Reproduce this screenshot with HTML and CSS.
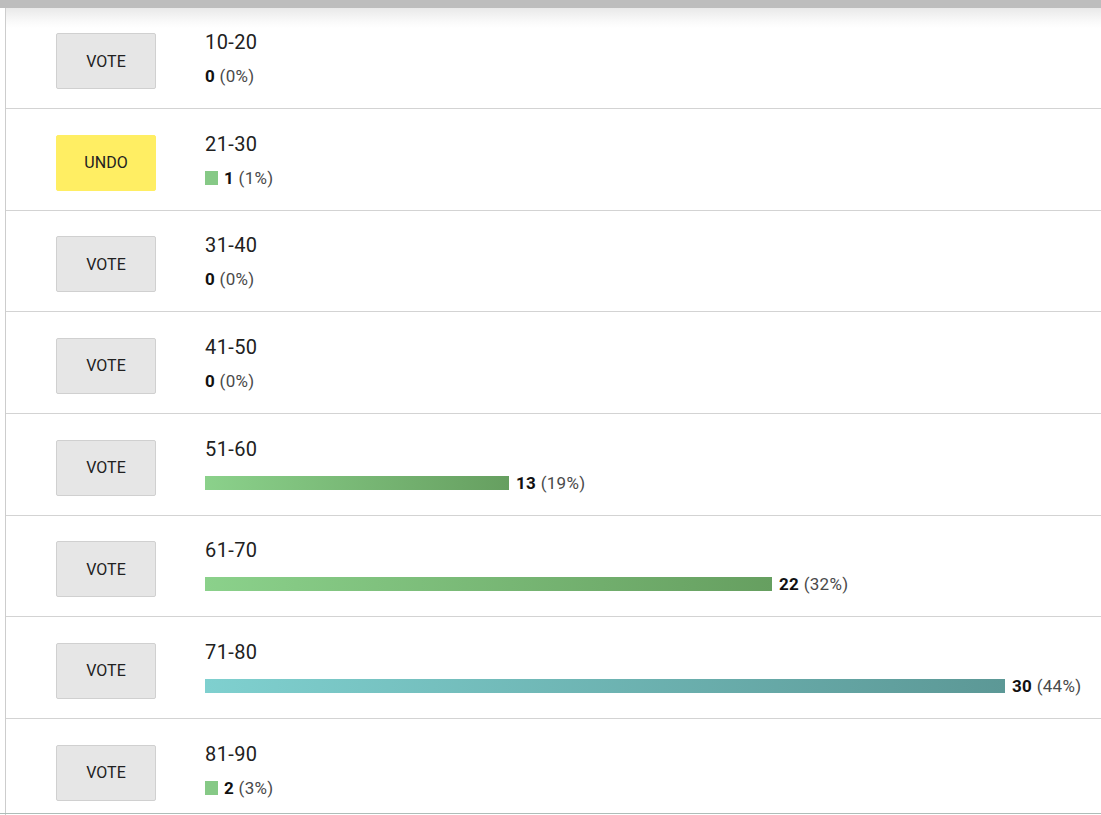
FILE: index.html
```html
<!DOCTYPE html>
<html>
<head>
<meta charset="utf-8">
<link rel="stylesheet" href="styles.css">
</head>
<body>
<div class="topbar"></div>
<div class="list">
  <div class="row">
    <button class="btn">VOTE</button>
    <div class="info">
      <div class="title">10-20</div>
      <div class="result"><b>0</b>&nbsp;<span class="pct">(0%)</span></div>
    </div>
  </div>
  <div class="row">
    <button class="btn btn-undo">UNDO</button>
    <div class="info">
      <div class="title">21-30</div>
      <div class="result"><span class="bar bar-small" style="width:13px"></span><b>1</b>&nbsp;<span class="pct">(1%)</span></div>
    </div>
  </div>
  <div class="row">
    <button class="btn">VOTE</button>
    <div class="info">
      <div class="title">31-40</div>
      <div class="result"><b>0</b>&nbsp;<span class="pct">(0%)</span></div>
    </div>
  </div>
  <div class="row">
    <button class="btn">VOTE</button>
    <div class="info">
      <div class="title">41-50</div>
      <div class="result"><b>0</b>&nbsp;<span class="pct">(0%)</span></div>
    </div>
  </div>
  <div class="row">
    <button class="btn">VOTE</button>
    <div class="info">
      <div class="title">51-60</div>
      <div class="result"><span class="bar bar-green" style="width:304px"></span><b>13</b>&nbsp;<span class="pct">(19%)</span></div>
    </div>
  </div>
  <div class="row">
    <button class="btn">VOTE</button>
    <div class="info">
      <div class="title">61-70</div>
      <div class="result"><span class="bar bar-green" style="width:567px"></span><b>22</b>&nbsp;<span class="pct">(32%)</span></div>
    </div>
  </div>
  <div class="row">
    <button class="btn">VOTE</button>
    <div class="info">
      <div class="title">71-80</div>
      <div class="result"><span class="bar bar-teal" style="width:800px"></span><b>30</b>&nbsp;<span class="pct">(44%)</span></div>
    </div>
  </div>
  <div class="row">
    <button class="btn">VOTE</button>
    <div class="info">
      <div class="title">81-90</div>
      <div class="result"><span class="bar bar-small" style="width:13px"></span><b>2</b>&nbsp;<span class="pct">(3%)</span></div>
    </div>
  </div>
</div>
<div class="bottom-line"></div>
</body>
</html>
```
FILE: styles.css
```css
html, body {
  margin: 0;
  padding: 0;
  background: #fff;
  overflow: hidden;
  font-family: Roboto, "Liberation Sans", Arial, sans-serif;
  color: #212121;
}

.topbar {
  height: 7.5px;
  background: #bdbdbd;
}

.list {
  margin-left: 5px;
  border-left: 1px solid #cdcdcd;
  background: linear-gradient(#e9e9e9 0, #fafafa 14px, #ffffff 20px);
}

.row {
  box-sizing: border-box;
  height: 101.67px;
  border-bottom: 1px solid #d3d3d3;
  display: flex;
  align-items: flex-start;
  padding-left: 50px;
}

.btn {
  box-sizing: border-box;
  width: 100px;
  height: 56px;
  margin-top: 25.5px;
  background: #e6e6e6;
  border: 1px solid #d0d0d0;
  border-radius: 2px;
  font-family: Roboto, "Liberation Sans", Arial, sans-serif;
  font-size: 16px;
  color: #212121;
  padding: 0;
  flex-shrink: 0;
}

.btn-undo {
  background: #ffee63;
  border-color: #ffee63;
}

.info {
  margin-left: 49px;
  padding-top: 22.5px;
  display: flex;
  flex-direction: column;
}

.title {
  font-size: 20px;
  letter-spacing: 0.4px;
  line-height: 24px;
  color: #212121;
}

.result {
  margin-top: 11.5px;
  height: 21px;
  display: flex;
  align-items: center;
  font-size: 17px;
  letter-spacing: 0.3px;
  color: #212121;
  white-space: nowrap;
}

.result b {
  font-weight: 700;
  color: #111;
}

.pct {
  color: #4a4a4a;
}

.bar {
  display: inline-block;
  height: 14px;
  margin-right: 7px;
  flex-shrink: 0;
}

.bar-small {
  background: #86c986;
  margin-right: 6px;
}

.bar-green {
  background: linear-gradient(to right, #8bd18b, #669f60);
}

.bar-teal {
  background: linear-gradient(to right, #7fd0cf, #5c9896);
}

.bottom-line {
  position: fixed;
  left: 0;
  right: 0;
  bottom: 1px;
  height: 1px;
  background: #aebdb8;
}
```
